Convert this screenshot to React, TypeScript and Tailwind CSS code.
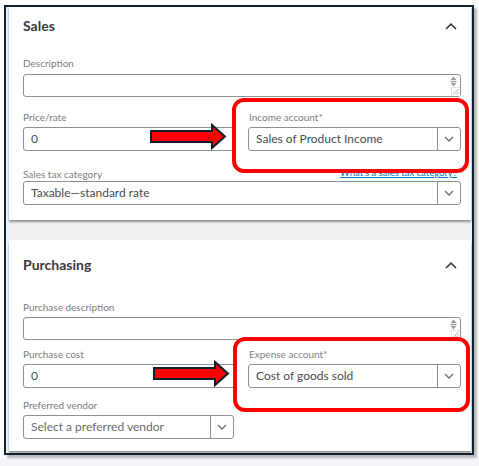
import React from 'react'

const font = { fontFamily: 'Lato, "Open Sans", Arial, sans-serif' }

function ChevronUp() {
  return (
    <svg width="12" height="7" viewBox="0 0 12 7" className="mt-[1px]">
      <path d="M1 6 L6 1.2 L11 6" fill="none" stroke="#393a3d" strokeWidth="1.6" />
    </svg>
  )
}

function ChevronDown() {
  return (
    <svg width="10" height="6" viewBox="0 0 10 6">
      <path d="M1 1 L5 5 L9 1" fill="none" stroke="#6b6c72" strokeWidth="1.3" />
    </svg>
  )
}

function Label({ children, className = '' }: { children: React.ReactNode; className?: string }) {
  return <div className={`text-[10px] leading-[14px] text-[#7c7e83] ${className}`}>{children}</div>
}

function Input({ value, h = 'h-[24px]' }: { value: string; h?: string }) {
  return (
    <div className={`${h} flex items-center border border-[#8d9096] rounded-[3px] bg-white pl-[7px] text-[12px] text-[#4a4b50]`}>
      {value}
    </div>
  )
}

function Select({ value, placeholder, h = 'h-[24px]' }: { value?: string; placeholder?: string; h?: string }) {
  return (
    <div className={`${h} flex border border-[#8d9096] rounded-[3px] bg-white text-[12px]`}>
      <div className={`flex-1 flex items-center pl-[7px] ${value ? 'text-[#4a4b50]' : 'text-[#6b6c72]'}`}>{value || placeholder}</div>
      <div className="w-[23px] border-l border-[#8d9096] flex items-center justify-center">
        <ChevronDown />
      </div>
    </div>
  )
}

function TextArea() {
  return (
    <div className="relative h-[23px] border border-[#8d9096] rounded-[3px] bg-white">
      <svg className="absolute right-[3px] top-[1px]" width="7" height="11" viewBox="0 0 7 11">
        <path d="M3.5 0.5 L6.5 4 L0.5 4 Z" fill="#9a9ca1" />
        <rect x="0.5" y="4.8" width="6" height="1.2" fill="#9a9ca1" />
        <path d="M0.5 6.8 L6.5 6.8 L3.5 10.5 Z" fill="#9a9ca1" />
      </svg>
      <div className="absolute right-0 bottom-0 w-[9px] h-[9px] border-l border-t border-[#e2e3e5] bg-white" />
      <svg className="absolute right-[1px] bottom-[1px]" width="7" height="7" viewBox="0 0 7 7">
        <path d="M1 6.5 L6.5 1 M4 6.5 L6.5 4" stroke="#9a9ca1" strokeWidth="0.9" />
      </svg>
    </div>
  )
}

function Card({ title, className, children }: { title: string; className: string; children: React.ReactNode }) {
  return (
    <div className={`ml-[3px] mr-[1px] bg-white pl-[14px] pr-[10px] shadow-[0_2px_2px_rgba(0,0,0,0.4)] ${className}`}>
      <div className="flex items-center justify-between h-[20px]">
        <h2 className="text-[14px] font-bold text-[#393a3d] leading-[20px]">{title}</h2>
        <div className="pr-[4px]"><ChevronUp /></div>
      </div>
      {children}
    </div>
  )
}

export default function App() {
  return (
    <div className="relative w-[479px] h-[466px] bg-white overflow-hidden" style={font}>
      <div className="absolute left-0 right-0 bottom-0 h-[8px] bg-[#f3f5f8]" />
      <div className="relative ml-[4px] mt-[5px] w-[470px] h-[450px] border-2 border-[#0c2333] bg-[#eff1f3] overflow-hidden shadow-[3px_3px_2px_rgba(0,0,0,0.28)]">
        <Card title="Sales" className="h-[213px] pt-[9px]">
          <Label className="mt-[20px] mb-[4px]">Description</Label>
          <TextArea />
          <div className="grid grid-cols-2 gap-x-[12px] mt-[13px]">
            <div>
              <Label className="mb-[3px]">Price/rate</Label>
              <Input value="0" />
            </div>
            <div>
              <Label className="mb-[3px] pl-[1px]">Income account*</Label>
              <Select value="Sales of Product Income" />
            </div>
          </div>
          <div className="flex items-end justify-between h-[14px] mt-[16px]">
            <Label>Sales tax category</Label>
            <a className="text-[9.5px] leading-[12px] text-[#0077c5] underline mr-[4px] mb-[2px]">What's a sales tax category?</a>
          </div>
          <Select value="Taxable—standard rate" />
        </Card>

        <Card title="Purchasing" className="h-[211px] pt-[15px] mt-[20px]">
          <Label className="mt-[25px] mb-[3px]">Purchase description</Label>
          <TextArea />
          <div className="grid grid-cols-2 gap-x-[12px] mt-[7px]">
            <div>
              <Label className="mb-[3px]">Purchase cost</Label>
              <Input value="0" />
            </div>
            <div>
              <Label className="mb-[3px] pl-[1px]">Expense account*</Label>
              <Select value="Cost of goods sold" />
            </div>
          </div>
          <div className="grid grid-cols-2 gap-x-[12px] mt-[10px]">
            <div className="pr-[2px]">
              <Label className="mb-[3px]">Preferred vendor</Label>
              <Select placeholder="Select a preferred vendor" />
            </div>
          </div>
        </Card>
      </div>

      {/* annotations */}
      <div className="absolute left-[232px] top-[98px] w-[237px] h-[75px] border-[4px] border-[#ff0000] rounded-[12px]" />
      <div className="absolute left-[233px] top-[337px] w-[237px] h-[75px] border-[4px] border-[#ff0000] rounded-[12px]" />
      <svg className="absolute left-0 top-0 pointer-events-none" width="479" height="466">
        <polygon points="151,131 212,131 212,125 225,136.5 212,148 212,142 151,142" fill="#ff0000" stroke="#0d1f2d" strokeWidth="2" strokeLinejoin="miter" />
        <polygon points="154,368 215,368 215,362 228,373.5 215,385 215,379 154,379" fill="#ff0000" stroke="#0d1f2d" strokeWidth="2" strokeLinejoin="miter" />
      </svg>
    </div>
  )
}
